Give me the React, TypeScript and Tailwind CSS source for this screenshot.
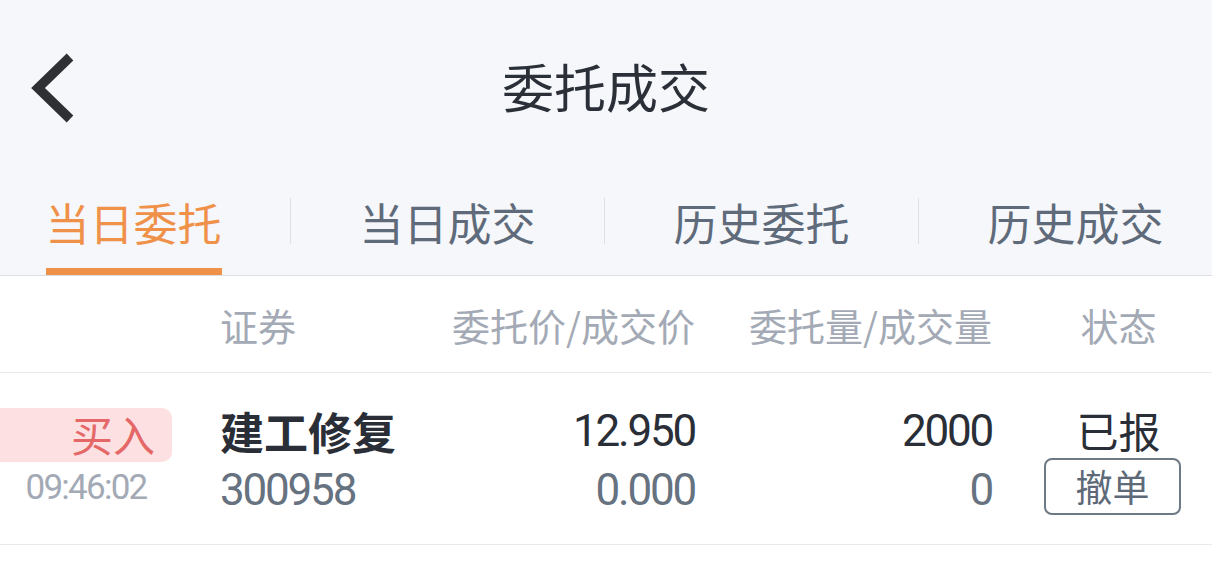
const cjk = "font-['Noto_Sans_CJK_SC',sans-serif]";
const num = "font-['Roboto','Noto_Sans_CJK_SC',sans-serif] tracking-[-0.05em]";

const tabs = ["当日委托", "当日成交", "历史委托", "历史成交"];

function BackIcon() {
  return (
    <svg width="80" height="180" viewBox="0 0 80 180" className="block">
      <polyline
        points="70,57 38,88 70,119"
        fill="none"
        stroke="#2f3033"
        strokeWidth="9.5"
        strokeLinejoin="miter"
      />
    </svg>
  );
}

export default function App() {
  return (
    <div className={`w-[1212px] h-[573px] bg-white overflow-hidden ${cjk}`}>
      {/* 顶部导航 */}
      <div className="bg-[#f5f7fa]">
        <div className="grid grid-cols-[1fr_auto_1fr] items-center h-[180px]">
          <div className="flex items-center">
            <BackIcon />
          </div>
          <h1 className="text-[52px] leading-none text-[#2b2f38] pb-[9px]">委托成交</h1>
          <div />
        </div>

        {/* Tab 栏 */}
        <div className="h-[96px] border-b border-[#dcdfe4] overflow-hidden">
          <div className="flex -ml-[23px] h-full">
            {tabs.map((t, i) => (
              <div key={t} className="flex h-full">
                {i > 0 && <div className="w-px h-[46px] mt-[18px] bg-[#dde0e5]" />}
                <div className="w-[313px] shrink-0 flex justify-center">
                  <div className="flex flex-col items-stretch pt-[20px]">
                    <span
                      className={`text-[44px] leading-[44px] whitespace-nowrap ${
                        i === 0 ? "text-[#f0914a]" : "text-[#5f6b7a]"
                      }`}
                    >
                      {t}
                    </span>
                    <div
                      className={`mt-[24px] h-[7px] ${i === 0 ? "bg-[#f0914a]" : "bg-transparent"}`}
                    />
                  </div>
                </div>
              </div>
            ))}
          </div>
        </div>
      </div>

      {/* 表头 */}
      <div className="flex items-center h-[97px] pt-[2px] border-b border-[#e8e9ec] text-[38px] leading-none text-[#a3aab5] whitespace-nowrap">
        <div className="w-[172px] shrink-0" />
        <div className="ml-[48px] w-[250px] shrink-0">证券</div>
        <div className="w-[225px] shrink-0 flex justify-end">
          <span>委托价/成交价</span>
        </div>
        <div className="w-[297px] shrink-0 flex justify-end">
          <span>委托量/成交量</span>
        </div>
        <div className="ml-[52px] w-[137px] shrink-0 text-center pl-[12px]">状态</div>
      </div>

      {/* 委托记录 */}
      <div className="flex items-start h-[172px] pt-[28px] border-b border-[#e8e9ec]">
        <div className="w-[172px] shrink-0 flex flex-col">
          <div className="mt-[7px] h-[54px] rounded-r-[10px] bg-[#fde1e2] flex items-center justify-end pr-[17px] pb-[3px]">
            <span className="text-[42px] leading-none text-[#e56868]">买入</span>
          </div>
          <div className={`h-[50px] flex items-center justify-center text-[35px] leading-none text-[#a3aab5] ${num}`}>
            09:46:02
          </div>
        </div>

        <div className="ml-[48px] w-[250px] shrink-0 flex flex-col">
          <div className="h-[59px] flex items-center text-[44px] leading-none font-bold text-[#2a2e37]">
            建工修复
          </div>
          <div className={`h-[59px] flex items-center text-[44px] leading-none text-[#66727f] ${num}`}>
            300958
          </div>
        </div>

        <div className={`w-[225px] shrink-0 flex flex-col items-end text-[44px] leading-none ${num}`}>
          <div className="h-[59px] flex items-center text-[#2a2e37]">12.950</div>
          <div className="h-[59px] flex items-center text-[#66727f]">0.000</div>
        </div>

        <div className={`w-[297px] shrink-0 flex flex-col items-end text-[44px] leading-none ${num}`}>
          <div className="h-[59px] flex items-center text-[#2a2e37]">2000</div>
          <div className="h-[59px] flex items-center text-[#66727f]">0</div>
        </div>

        <div className="ml-[52px] w-[137px] shrink-0 flex flex-col">
          <div className="h-[57px] flex items-center justify-center pl-[12px] text-[42px] leading-none text-[#2a2e37]">
            已报
          </div>
          <button className="h-[57px] w-full border-2 border-[#6e7986] rounded-[8px] flex items-center justify-center text-[37px] leading-none text-[#5e6a78]">
            撤单
          </button>
        </div>
      </div>
    </div>
  );
}
